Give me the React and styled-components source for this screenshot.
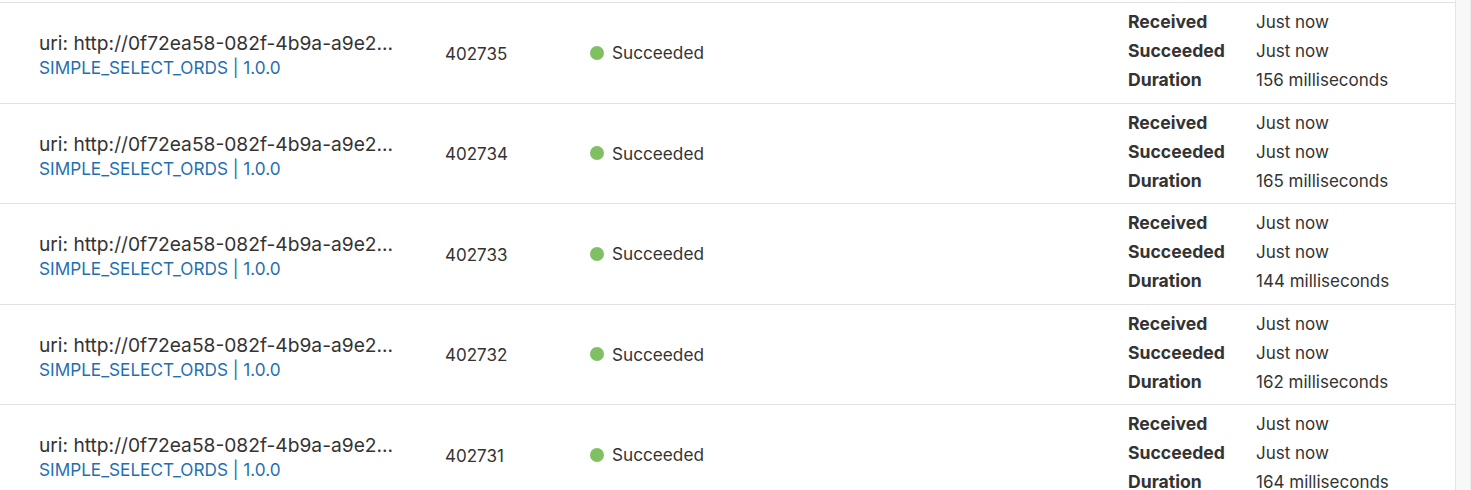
import React from "react";
import styled, { createGlobalStyle } from "styled-components";

const Global = createGlobalStyle`
  html, body { margin: 0; padding: 0; background: #fff; }
  body { font-family: Inter, "Noto Sans", sans-serif; color: #333; overflow: hidden; }
`;

const Page = styled.div`
  display: flex;
  width: 1471px;
  height: 490px;
  overflow: hidden;
`;

const Table = styled.div`
  flex: 0 0 1456px;
  padding-top: 2px;
  border-right: 1px solid #e4e4e4;
  box-sizing: border-box;
`;

const Scrollbar = styled.div`
  flex: 1;
  background: #f8f8f8;
  border-right: 1px solid #ececec;
`;

const Row = styled.div`
  display: grid;
  grid-template-columns: 445px 145px 1fr 327px;
  align-items: center;
  height: 99.5px;
  border-top: 1px solid #e2e2e2;
  box-sizing: content-box;
`;

const NameCell = styled.div`
  padding-left: 39px;
  padding-top: 4px;
  display: flex;
  flex-direction: column;
  gap: 3px;
`;

const Uri = styled.div`
  font-size: 19.2px;
  line-height: 24px;
  color: #333;
  white-space: nowrap;
`;

const Link = styled.a`
  font-size: 17.2px;
  line-height: 20px;
  color: #1f6fb2;
  text-decoration: none;
`;

const IdCell = styled.div`
  font-size: 17px;
  color: #333;
  padding-top: 2px;
`;

const StatusCell = styled.div`
  display: flex;
  align-items: center;
  gap: 8px;
  font-size: 17.2px;
  color: #333;
`;

const Dot = styled.span`
  width: 14px;
  height: 14px;
  border-radius: 50%;
  background: ${(p) => p.$color};
`;

const Details = styled.div`
  display: grid;
  grid-template-columns: 128px 1fr;
  row-gap: 4px;
  font-size: 17px;
  line-height: 25px;
  padding-bottom: 2px;
`;

const Label = styled.div`
  font-weight: 700;
  font-size: 17.6px;
  line-height: 24px;
  color: #333;
`;

const Value = styled.div`
  color: #333;
`;

const rows = [
  { id: "402735", dur: "156" },
  { id: "402734", dur: "165" },
  { id: "402733", dur: "144" },
  { id: "402732", dur: "162" },
  { id: "402731", dur: "164" },
];

export default function App() {
  return (
    <>
      <Global />
      <Page>
        <Table>
          {rows.map((r) => (
            <Row key={r.id}>
              <NameCell>
                <Uri>uri: http://0f72ea58-082f-4b9a-a9e2...</Uri>
                <Link href="#">SIMPLE_SELECT_ORDS | 1.0.0</Link>
              </NameCell>
              <IdCell>{r.id}</IdCell>
              <StatusCell>
                <Dot $color="#80c063" />
                Succeeded
              </StatusCell>
              <Details>
                <Label>Received</Label>
                <Value>Just now</Value>
                <Label>Succeeded</Label>
                <Value>Just now</Value>
                <Label>Duration</Label>
                <Value>{r.dur} milliseconds</Value>
              </Details>
            </Row>
          ))}
        </Table>
        <Scrollbar />
      </Page>
    </>
  );
}
